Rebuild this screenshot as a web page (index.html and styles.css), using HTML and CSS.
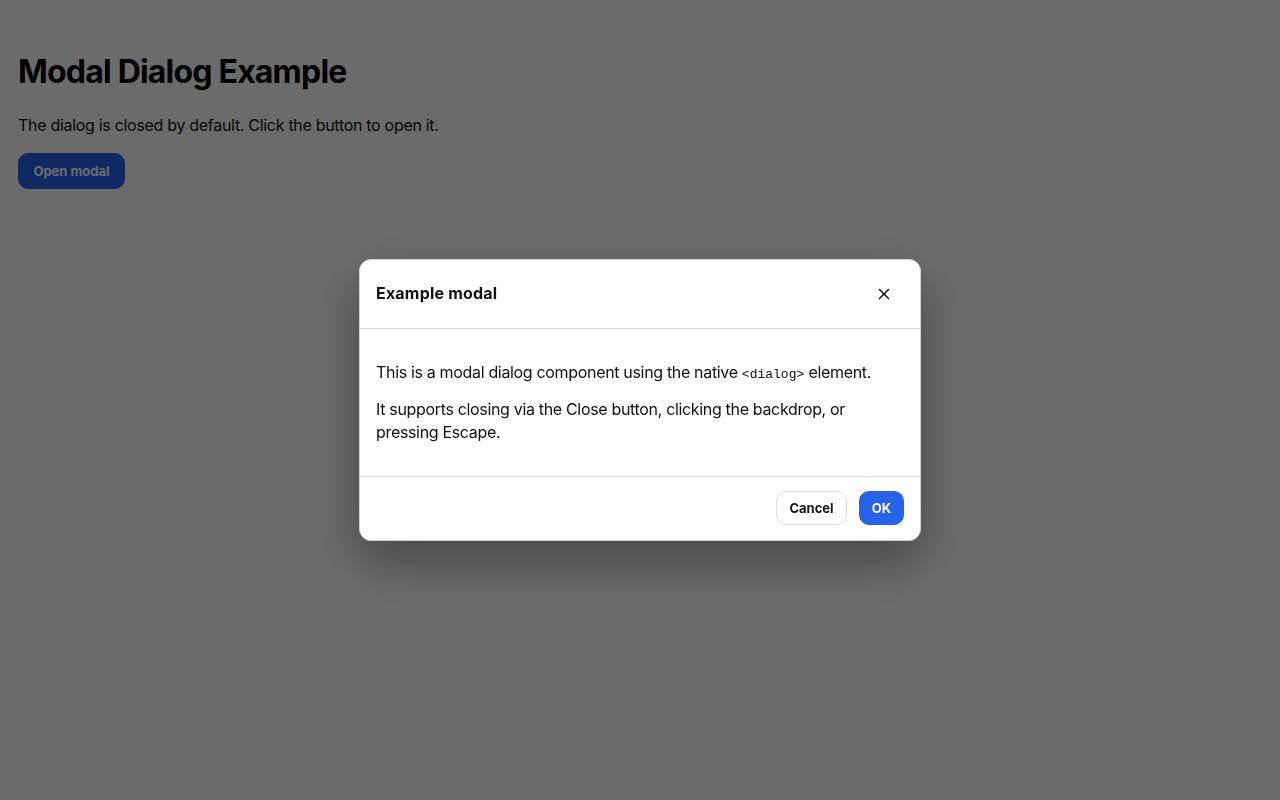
FILE: index.html
```html
<!DOCTYPE html>
<html lang="en">
<head>
    <meta charset="UTF-8">
    <meta name="viewport" content="width=device-width, initial-scale=1.0">
    <title>Modal Dialog Example</title>
    <link rel="stylesheet" href="styles.css">
</head>
<body>
    <main class="page">
        <h1>Modal Dialog Example</h1>
        <p>The dialog is closed by default. Click the button to open it.</p>
        <button class="btn btn-primary btn-open" type="button">Open modal</button>
    </main>

    <div class="backdrop">
        <div class="modal" role="dialog" aria-labelledby="modalTitle">
            <div class="modal-header">
                <h2 id="modalTitle">Example modal</h2>
                <button class="close-btn" type="button" aria-label="Close">
                    <svg width="14" height="14" viewBox="0 0 14 14" fill="none" stroke="#111" stroke-width="1.5" stroke-linecap="round">
                        <path d="M2.5 2.5L11.5 11.5M11.5 2.5L2.5 11.5"/>
                    </svg>
                </button>
            </div>
            <div class="modal-body">
                <p>This is a modal dialog component using the native <code>&lt;dialog&gt;</code> element.</p>
                <p>It supports closing via the Close button, clicking the backdrop, or pressing Escape.</p>
            </div>
            <div class="modal-footer">
                <button class="btn btn-secondary" type="button">Cancel</button>
                <button class="btn btn-primary" type="button">OK</button>
            </div>
        </div>
    </div>
</body>
</html>
```

FILE: styles.css
```css
body {
    font-family: Inter, "Noto Sans", Arial, sans-serif;
    background-color: #fff;
    color: #111;
    margin: 0;
}
.page {
    padding: 32px 18px;
}
.page h1 {
    font-size: 32px;
    font-weight: 700;
    line-height: 38px;
    letter-spacing: -0.8px;
    margin: 21px 0 22px;
    color: #000;
}
.page p {
    font-size: 16px;
    line-height: 24px;
    letter-spacing: -0.3px;
    margin: 0 0 16px;
}
.btn {
    font-family: inherit;
    font-size: 13px;
    font-weight: 700;
    height: 34px;
    padding: 0 12px;
    border-radius: 10px;
    cursor: pointer;
}
.btn-primary {
    background-color: #2563eb;
    color: #fff;
    border: 1px solid #2563eb;
}
.btn-secondary {
    background-color: #fff;
    color: #111;
    border: 1px solid #dcdcdc;
}
.btn-open {
    height: 36px;
    padding: 0 14px;
    width: 107px;
}
.backdrop {
    position: fixed;
    inset: 0;
    background-color: rgba(0, 0, 0, 0.58);
    display: flex;
    justify-content: center;
    align-items: center;
}
.modal {
    width: 560px;
    background-color: #fff;
    border: 1px solid #d4d4d4;
    border-radius: 12px;
    box-shadow: 0 20px 50px rgba(0, 0, 0, 0.35);
    overflow: hidden;
}
.modal-header {
    display: flex;
    align-items: center;
    justify-content: space-between;
    padding: 16px;
    border-bottom: 1px solid #dcdcdc;
}
.modal-header h2 {
    margin: 0 0 2px;
    font-size: 16px;
    font-weight: 700;
    letter-spacing: 0.2px;
}
.close-btn {
    width: 36px;
    height: 36px;
    border: none;
    background: none;
    border-radius: 8px;
    display: flex;
    align-items: center;
    justify-content: center;
    cursor: pointer;
    margin-right: 2px;
}
.modal-body {
    padding: 20px 16px 20px;
}
.modal-body p {
    font-size: 16px;
    line-height: 23px;
    letter-spacing: -0.33px;
    margin: 12px 0;
}
.modal-body code {
    font-family: "Liberation Mono", "DejaVu Sans Mono", monospace;
    font-size: 13px;
    letter-spacing: 0;
}
.modal-footer {
    display: flex;
    justify-content: flex-end;
    gap: 12px;
    padding: 14px 16px 15px;
    border-top: 1px solid #dcdcdc;
}
```
